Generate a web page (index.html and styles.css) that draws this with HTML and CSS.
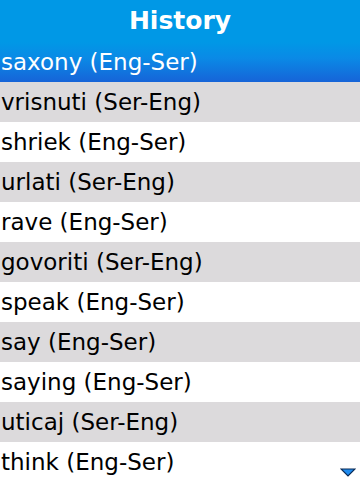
FILE: index.html
```html
<!doctype html>
<html>
<head>
<meta charset="utf-8">
<title>History</title>
<link rel="stylesheet" href="styles.css">
</head>
<body>
<div class="screen">
	<div class="title">History</div>
	<ul class="list">
		<li class="selected">saxony (Eng-Ser)</li>
		<li>vrisnuti (Ser-Eng)</li>
		<li>shriek (Eng-Ser)</li>
		<li>urlati (Ser-Eng)</li>
		<li>rave (Eng-Ser)</li>
		<li>govoriti (Ser-Eng)</li>
		<li>speak (Eng-Ser)</li>
		<li>say (Eng-Ser)</li>
		<li>saying (Eng-Ser)</li>
		<li>uticaj (Ser-Eng)</li>
		<li>think (Eng-Ser)</li>
	</ul>
	<svg class="more" width="16" height="9" viewBox="0 0 16 9">
		<polygon points="1,1 15,1 8,8" fill="#1f8cf0" stroke="#0a2a55" stroke-width="1.2"/>
	</svg>
</div>
</body>
</html>
```
FILE: styles.css
```css
html, body{
	margin: 0;
	padding: 0;
	background: #ffffff;
}

.screen{
	position: relative;
	width: 360px;
	height: 480px;
	overflow: hidden;
	font-family: "DejaVu Sans", sans-serif;
}

.title{
	height: 42px;
	line-height: 42px;
	background: #0098e6;
	color: #ffffff;
	font-size: 25px;
	font-weight: bold;
	text-align: center;
}

.list{
	list-style: none;
	margin: 0;
	padding: 0;
}

.list li{
	height: 40px;
	line-height: 40px;
	padding-left: 1px;
	font-size: 23px;
	color: #000000;
	white-space: nowrap;
}

.list li:nth-child(even){
	background: #dcdadc;
}

.list li.selected{
	color: #ffffff;
	background: linear-gradient(#0098e6, #0a8ae6 40%, #1664d8);
}

.more{
	position: absolute;
	right: 4px;
	bottom: 3px;
}
```
